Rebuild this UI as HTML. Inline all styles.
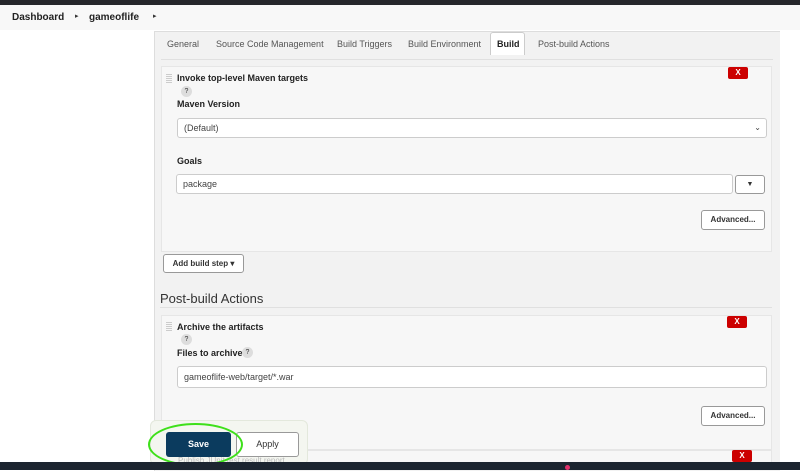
<!DOCTYPE html><html><head><style>
body{margin:0;width:800px;height:470px;overflow:hidden;background:#fff;font-family:"Liberation Sans",sans-serif;position:relative;font-size:9px;color:#333}
div,span{position:absolute;box-sizing:border-box}
.b{font-weight:bold;color:#222}
.inp{background:#fff;border:1px solid #ccc;border-radius:3px;padding-left:6px;line-height:18px;font-size:9px;color:#444}
.btn{background:#fff;border:1px solid #999;border-radius:3px;text-align:center;font-size:8px;font-weight:bold;color:#333}
.x{background:#c00;color:#fff;font-size:8px;font-weight:bold;text-align:center;border-radius:2px;width:20px;height:12px;line-height:12px}
.q{width:11px;height:11px;border-radius:6px;background:#ddd;font-size:7px;text-align:center;line-height:11px;color:#333}
.grip{width:6px;height:10px;background:repeating-linear-gradient(0deg,#ccc 0 1px,transparent 1px 2px)}
</style></head><body>
<div style="left:0;top:0;width:800px;height:5px;background:#26272b"></div>
<div style="left:0;top:5px;width:800px;height:25px;background:#f8f8f8"></div>
<span class="b" style="left:12px;top:12px;font-size:10px">Dashboard</span>
<span style="left:75px;top:12px;font-size:7px">▸</span>
<span class="b" style="left:89px;top:12px;font-size:10px">gameoflife</span>
<span style="left:153px;top:12px;font-size:7px">▸</span>
<div style="left:154px;top:31px;width:626px;height:440px;background:#f2f2f2;border-left:1px solid #ddd;border-top:1px solid #ddd"></div>
<div style="left:161px;top:59px;width:612px;height:1px;background:#e0e0e0"></div>
<span style="left:167px;top:39px;color:#555">General</span>
<span style="left:216px;top:39px;color:#555">Source Code Management</span>
<span style="left:337px;top:39px;color:#555">Build Triggers</span>
<span style="left:408px;top:39px;color:#555">Build Environment</span>
<div style="left:490px;top:32px;width:35px;height:23px;background:#fff;border:1px solid #ccc;border-bottom:none;border-radius:3px 3px 0 0"></div>
<span class="b" style="left:497px;top:39px">Build</span>
<span style="left:538px;top:39px;color:#555">Post-build Actions</span>
<div style="left:161px;top:66px;width:611px;height:186px;background:#f7f7f7;border:1px solid #e6e6e6"></div>
<div class="grip" style="left:166px;top:73px"></div>
<span class="b" style="left:177px;top:73px">Invoke top-level Maven targets</span>
<div class="x" style="left:728px;top:67px">X</div>
<div class="q" style="left:181px;top:86px">?</div>
<span class="b" style="left:177px;top:99px">Maven Version</span>
<div class="inp" style="left:177px;top:118px;width:590px;height:20px">(Default)<span style="right:5px;top:0;font-size:8px">⌄</span></div>
<span class="b" style="left:177px;top:156px">Goals</span>
<div class="inp" style="left:176px;top:174px;width:557px;height:20px">package</div>
<div class="btn" style="left:735px;top:175px;width:30px;height:19px;line-height:17px;font-size:7px">▼</div>
<div class="btn" style="left:701px;top:210px;width:64px;height:20px;line-height:18px">Advanced...</div>
<div class="btn" style="left:163px;top:254px;width:81px;height:19px;line-height:17px">Add build step ▾</div>
<span style="left:160px;top:291px;font-size:13px;color:#333">Post-build Actions</span>
<div style="left:160px;top:307px;width:612px;height:1px;background:#e0e0e0"></div>
<div style="left:161px;top:315px;width:611px;height:135px;background:#f7f7f7;border:1px solid #e6e6e6"></div>
<div class="grip" style="left:166px;top:321px"></div>
<span class="b" style="left:177px;top:322px">Archive the artifacts</span>
<div class="x" style="left:727px;top:316px">X</div>
<div class="q" style="left:181px;top:334px">?</div>
<span class="b" style="left:177px;top:348px">Files to archive</span>
<div class="q" style="left:242px;top:347px">?</div>
<div class="inp" style="left:177px;top:366px;width:590px;height:22px;line-height:20px">gameoflife-web/target/*.war</div>
<div class="btn" style="left:701px;top:406px;width:64px;height:20px;line-height:18px">Advanced...</div>
<div style="left:161px;top:450px;width:611px;height:15px;background:#f7f7f7;border:1px solid #e6e6e6"></div>
<div class="x" style="left:732px;top:450px">X</div>
<div style="left:150px;top:420px;width:158px;height:45px;background:#f4f6f0;border:1px solid #e3e8dc;border-radius:6px"></div>
<span style="left:178px;top:456px;color:#bbb;font-size:8px">Publish JUnit test result report</span>
<div style="left:166px;top:432px;width:65px;height:25px;background:#0b3b5e;border-radius:3px;color:#fff;font-weight:bold;text-align:center;line-height:25px;font-size:9px">Save</div>
<div class="btn" style="left:236px;top:432px;width:63px;height:25px;line-height:23px;font-size:9px;font-weight:normal">Apply</div>
<div style="left:148px;top:423px;width:95px;height:43px;border:2.5px solid #3ee01a;border-radius:50%"></div>
<div style="left:0;top:462px;width:800px;height:8px;background:#1c2530"></div>
<div style="left:565px;top:465px;width:5px;height:5px;border-radius:3px;background:#e0306a"></div>
</body></html>
